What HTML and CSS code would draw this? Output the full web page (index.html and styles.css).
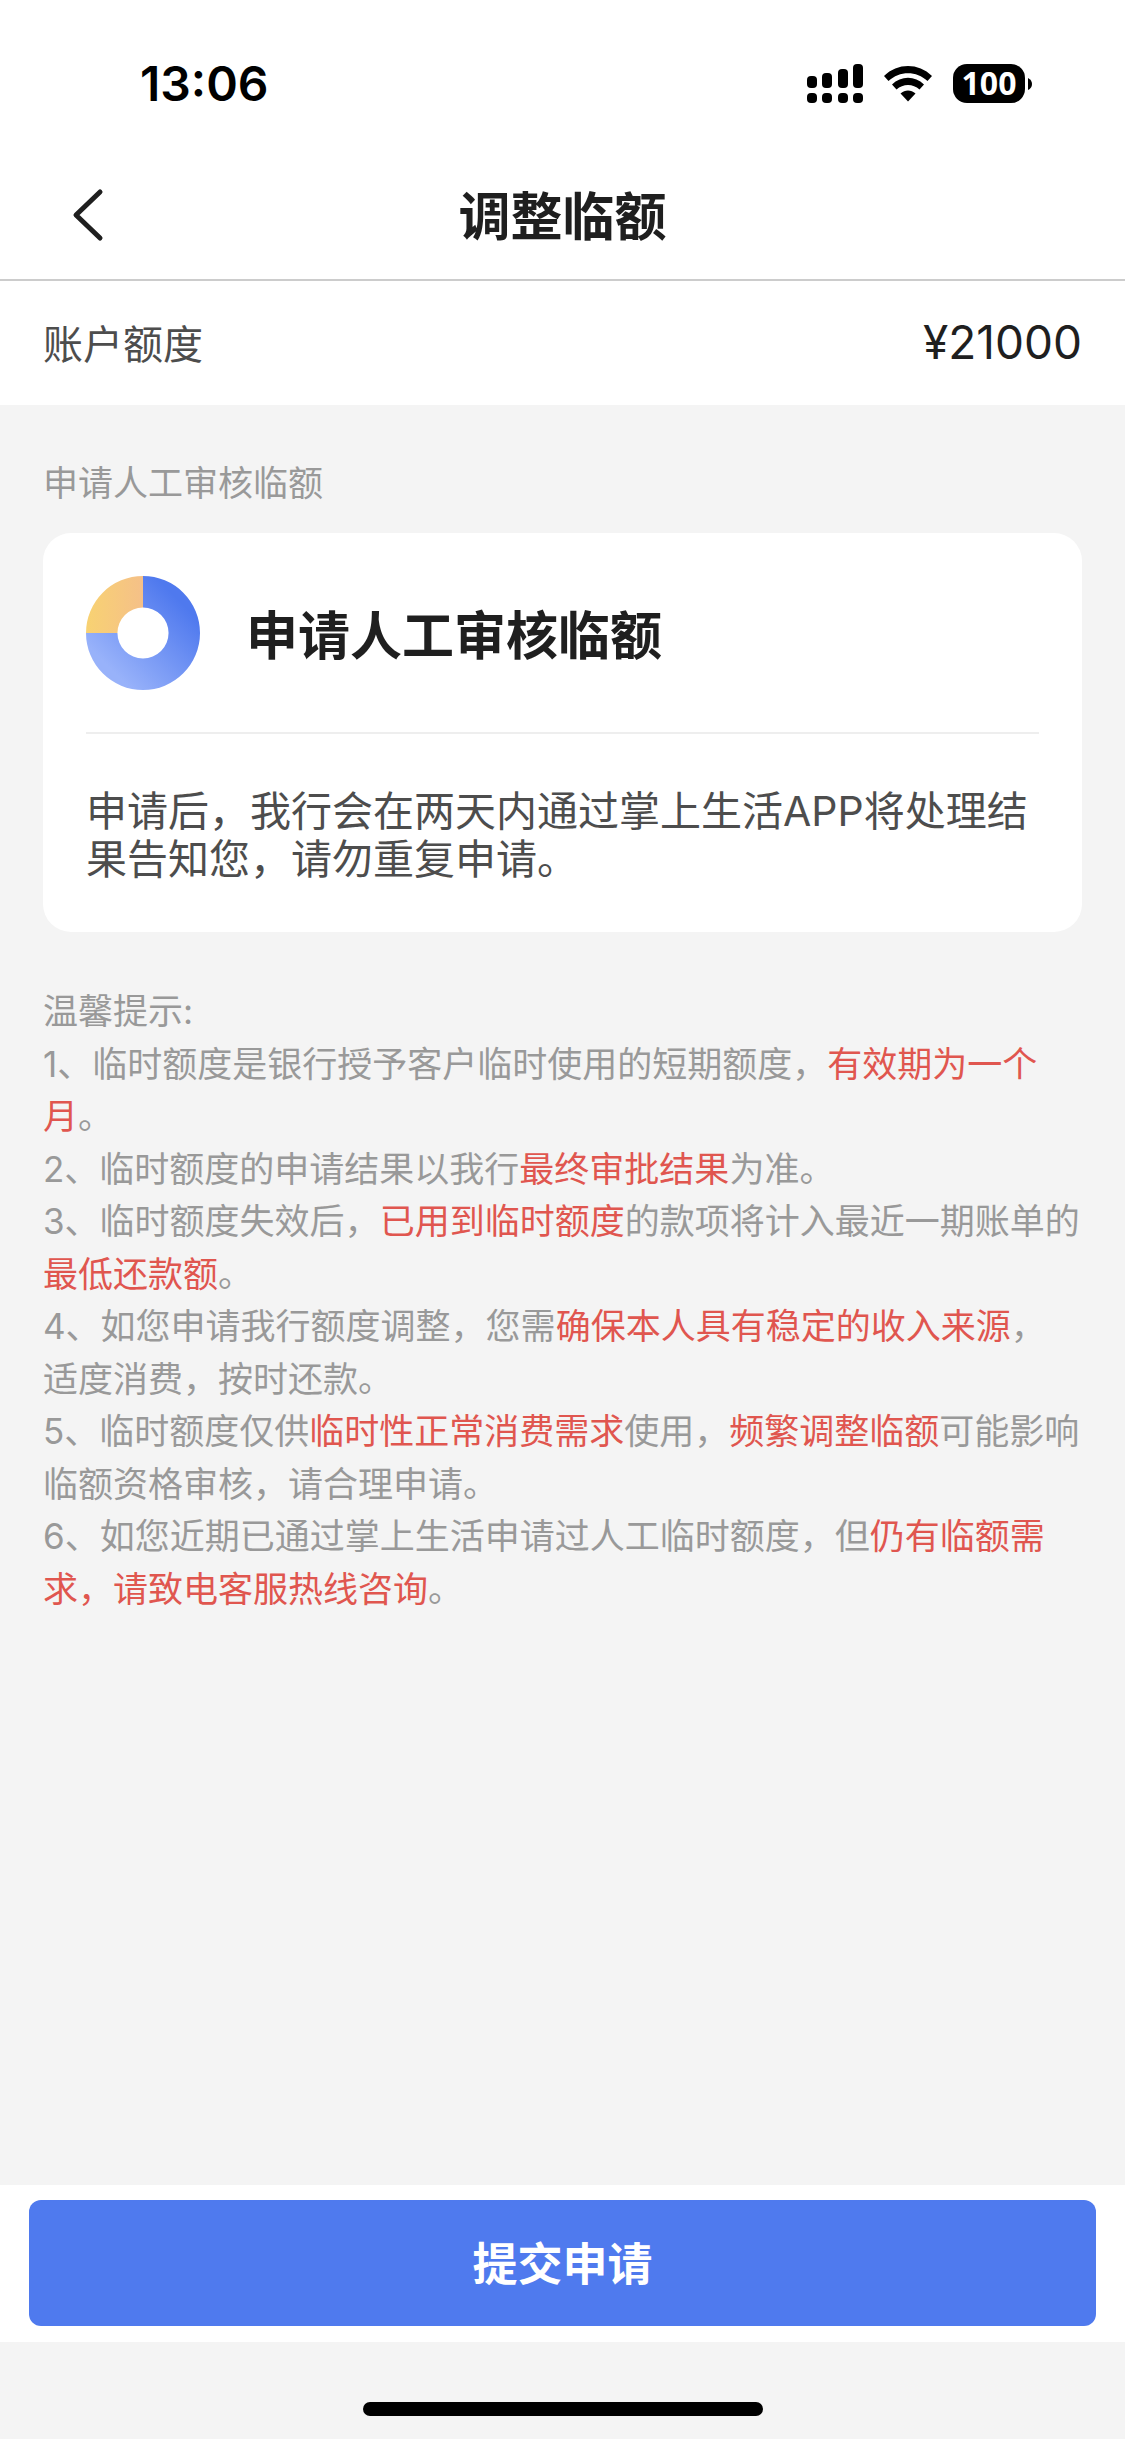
FILE: index.html
```
<!DOCTYPE html>
<html lang="zh-CN">
<head>
  <meta charset="UTF-8">
  <meta name="viewport" content="width=device-width, initial-scale=1.0">
  <title>调整临额</title>
  <link rel="stylesheet" href="styles.css">
</head>
<body>

  <!-- Status bar -->
  <div class="status-bar">
    <span class="time">13:06</span>
    <div class="status-icons">
      <svg width="56" height="40" viewBox="0 0 56 40">
        <rect x="0" y="12" width="10" height="12" rx="4"/>
        <rect x="15" y="9" width="10" height="15" rx="4"/>
        <rect x="31" y="5" width="10" height="19" rx="4"/>
        <rect x="46" y="0" width="10" height="24" rx="4"/>
        <rect x="0" y="29" width="10" height="10" rx="4"/>
        <rect x="15" y="29" width="10" height="10" rx="4"/>
        <rect x="31" y="29" width="10" height="10" rx="4"/>
        <rect x="46" y="29" width="10" height="10" rx="4"/>
      </svg>
      <svg width="48" height="40" viewBox="0 0 48 40">
        <path d="M0 12C13.500-1.300 34.500-1.300 48 12L43.500 17C32.500 6.500 15.500 6.500 4.500 17Z"/>
        <path d="M8 20.500C17 11.500 31 11.500 40 20.500L35.500 25.500C29 19.500 19 19.500 12.500 25.500Z"/>
        <path d="M16.500 29.500C21 25.500 27 25.500 31.500 29.500L24 37.500Z"/>
      </svg>
      <div class="battery">
        <span class="battery-level">100</span>
        <svg width="4" height="12" viewBox="0 0 4 12"><path d="M0 0Q4 2 4 6Q4 10 0 12Z"/></svg>
      </div>
    </div>
  </div>

  <!-- Header -->
  <header>
    <button class="back" aria-label="返回">
      <svg width="32" height="54" viewBox="0 0 32 54">
        <path d="M28 4L4 27L28 50" fill="none" stroke="#1f1f1f" stroke-width="5" stroke-linecap="round" stroke-linejoin="round"/>
      </svg>
    </button>
    <h1>调整临额</h1>
  </header>

  <!-- Account limit -->
  <div class="limit-row">
    <span class="limit-label">账户额度</span>
    <span class="limit-value">¥21000</span>
  </div>

  <main>
    <h2 class="section-title">申请人工审核临额</h2>

    <div class="card">
      <div class="card-head">
        <svg width="114" height="114" viewBox="0 0 116 116">
          <defs>
            <linearGradient id="blue" x1="1" y1="0" x2="0" y2="1">
              <stop offset="0.2" stop-color="#4f79ee"/>
              <stop offset="0.8" stop-color="#98b2fa"/>
            </linearGradient>
            <linearGradient id="yellow" x1="0" y1="0" x2="1" y2="0">
              <stop offset="0" stop-color="#f8d272"/>
              <stop offset="1" stop-color="#f5c088"/>
            </linearGradient>
          </defs>
          <path d="M58 0A58 58 0 1 1 0 58H32A26 26 0 1 0 58 32Z" fill="url(#blue)"/>
          <path d="M0 58A58 58 0 0 1 58 0V32A26 26 0 0 0 32 58Z" fill="url(#yellow)"/>
        </svg>
        <h3>申请人工审核临额</h3>
      </div>
      <p class="card-text">申请后，我行会在两天内通过掌上生活APP将处理结果告知您，请勿重复申请。</p>
    </div>

    <!-- Tips -->
    <div class="tips">
      <p>温馨提示:</p>
      <p>1、临时额度是银行授予客户临时使用的短期额度，<em>有效期为一个月</em>。</p>
      <p>2、临时额度的申请结果以我行<em>最终审批结果</em>为准。</p>
      <p>3、临时额度失效后，<em>已用到临时额度</em>的款项将计入最近一期账单的<em>最低还款额</em>。</p>
      <p>4、如您申请我行额度调整，您需<em>确保本人具有稳定的收入来源</em>，<br>适度消费，按时还款。</p>
      <p>5、临时额度仅供<em>临时性正常消费需求</em>使用，<em>频繁调整临额</em>可能影响临额资格审核，请合理申请。</p>
      <p>6、如您近期已通过掌上生活申请过人工临时额度，但<em>仍有临额需求，请致电客服热线咨询</em>。</p>
    </div>
  </main>

  <!-- Submit -->
  <footer>
    <button class="submit">提交申请</button>
  </footer>
  <div class="home-area">
    <div class="home-indicator"></div>
  </div>

</body>
</html>
```
FILE: styles.css
```
* {
  box-sizing: border-box;
}

body {
  margin: 0;
  min-height: 100vh;
  display: flex;
  flex-direction: column;
  font-family: Inter, "Noto Sans CJK SC", sans-serif;
  background-color: #f4f4f4;
  color: #1f1f1f;
}

h1, h2, h3, p {
  margin: 0;
}

svg {
  display: block;
  flex-shrink: 0;
}

button {
  font-family: inherit;
  border: none;
  cursor: pointer;
}

.status-bar {
  display: flex;
  justify-content: space-between;
  align-items: center;
  height: 151px;
  padding: 16px 93px 0 140px;
  background-color: #ffffff;
  color: #000000;
}

.time {
  font-size: 48px;
  font-weight: 600;
}

.status-icons {
  display: flex;
  align-items: center;
  gap: 21px;
}

.battery {
  display: flex;
  align-items: center;
  gap: 3px;
}

.battery-level {
  width: 72px;
  height: 39px;
  border-radius: 14px;
  background-color: #000000;
  color: #ffffff;
  font-family: "Noto Sans", sans-serif;
  font-size: 32px;
  font-weight: bold;
  line-height: 38px;
  text-align: center;
}

header {
  display: grid;
  grid-template-columns: 120px 1fr 120px;
  align-items: center;
  height: 130px;
  background-color: #ffffff;
  border-bottom: 2px solid #cccccc;
}

.back {
  padding: 0 0 0 72px;
  background: none;
}

h1 {
  padding-bottom: 4px;
  font-size: 52px;
  font-weight: 600;
  text-align: center;
}

.limit-row {
  display: flex;
  justify-content: space-between;
  align-items: center;
  height: 124px;
  padding: 0 43px 2px;
  background-color: #ffffff;
}

.limit-label {
  font-size: 40px;
  color: #4d4d4d;
}

.limit-value {
  font-size: 46px;
}

main {
  flex: 1;
  padding: 52px 43px;
}

.section-title {
  font-size: 35px;
  font-weight: normal;
  line-height: 52px;
  color: #999999;
}

.card {
  margin-top: 24px;
  padding: 0 43px 49px;
  border-radius: 28px;
  background-color: #ffffff;
}

.card-head {
  display: flex;
  align-items: center;
  gap: 46px;
  height: 201px;
  border-bottom: 2px solid #eeeeee;
}

h3 {
  font-size: 52px;
  font-weight: 600;
}

.card-text {
  margin-top: 53px;
  font-size: 41px;
  line-height: 48px;
  color: #4d4d4d;
}

.tips {
  margin-top: 53px;
  font-size: 35px;
  line-height: 1.5;
  color: #999999;
}

.tips em {
  font-style: normal;
  color: #e0564f;
}

footer {
  padding: 15px 29px 16px;
  background-color: #ffffff;
}

.submit {
  display: block;
  width: 100%;
  height: 126px;
  padding-bottom: 4px;
  border-radius: 12px;
  background-color: #4f7aee;
  color: #ffffff;
  font-size: 45px;
  font-weight: 600;
}

.submit:active {
  background-color: #4169d6;
}

.home-area {
  display: flex;
  justify-content: center;
  align-items: flex-end;
  height: 97px;
  padding-bottom: 23px;
}

.home-indicator {
  width: 400px;
  height: 14px;
  border-radius: 7px;
  background-color: #000000;
}
```
